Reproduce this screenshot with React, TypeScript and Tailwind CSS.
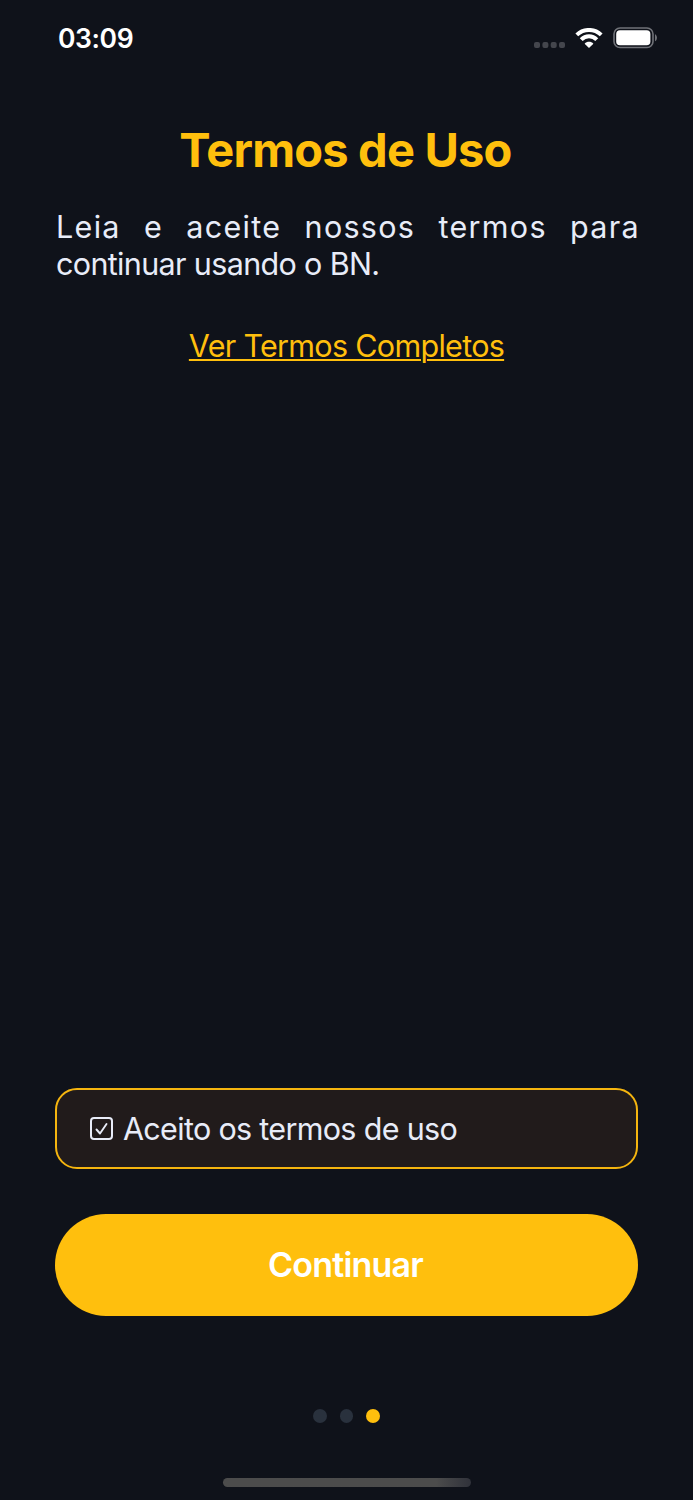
const steps = [
  { id: 'welcome', active: false },
  { id: 'profile', active: false },
  { id: 'terms', active: true },
]

function StatusBar() {
  return (
    <header className="flex h-[76px] items-center justify-between pl-[58px] pr-[35px]">
      <span className="text-[26.5px] font-semibold leading-none tracking-[-0.4px] text-white">03:09</span>
      <div className="flex items-center">
        <svg width="32" height="6" viewBox="0 0 32 6" fill="#44464d" className="mt-[13px]">
          <rect x="0" y="0" width="6" height="6" rx="2" />
          <rect x="8.4" y="0" width="6" height="6" rx="2" />
          <rect x="16.7" y="0" width="6" height="6" rx="2" />
          <rect x="25" y="0" width="6" height="6" rx="2" />
        </svg>
        <svg width="28" height="20" viewBox="0 0 28 20" fill="none" stroke="white" className="ml-[9px]">
          <path d="M1.8 6.9C8.6 0.3 19.4 0.3 26.2 6.9" strokeWidth="4" />
          <path d="M6.2 11.7C10.6 7 17.4 7 21.8 11.7" strokeWidth="4" />
          <path d="M14 20L9.6 15.7C12 13.1 16 13.1 18.4 15.7Z" fill="white" stroke="none" />
        </svg>
        <svg width="45" height="22" viewBox="0 0 45 22" className="ml-[10px]">
          <rect x="1" y="1" width="39" height="19.5" rx="6" fill="none" stroke="#707278" strokeWidth="1.6" />
          <rect x="3.2" y="3.3" width="34.2" height="14.9" rx="3.8" fill="white" />
          <path d="M42 7.2C44.6 8.2 44.6 13.2 42 14.2Z" fill="#707278" />
        </svg>
      </div>
    </header>
  )
}

export default function App() {
  return (
    <div className="flex h-[1500px] w-[693px] flex-col bg-[#0f121a] font-['Inter',sans-serif]">
      <StatusBar />

      <main className="flex flex-1 flex-col px-[55px]">
        <h1 className="mt-[45px] pr-[2px] text-center text-[47px] font-bold leading-[58px] tracking-[-0.8px] text-[#ffbf0d]">
          Termos de Uso
        </h1>

        <p className="-mr-[2px] mt-[29px] pl-[1px] text-[30.5px] leading-[37px] text-[#e8ecf8]">
          <span className="block tracking-[1.3px] [text-align-last:justify]">
            Leia e aceite nossos termos para
          </span>
          <span className="block tracking-[-0.65px]">continuar usando o BN.</span>
        </p>

        <a
          href="#termos"
          className="mt-[45px] self-center text-[30.5px] leading-[37px] tracking-[-0.7px] text-[#ffbf0d] underline decoration-2 underline-offset-[2px]"
        >
          Ver Termos Completos
        </a>

        <div className="mt-auto flex h-[81px] items-center rounded-[22px] border-2 border-[#f5b50f] bg-[#211b1b] pl-[33px] text-[#e8ecf8]">
          <svg width="23" height="23" viewBox="0 0 23 23" fill="none" stroke="currentColor">
            <rect x="1" y="1" width="21" height="21" rx="3" strokeWidth="2" />
            <path d="M6.5 12.5L10 16.5L16.5 7" strokeWidth="1.9" strokeLinecap="round" strokeLinejoin="round" />
          </svg>
          <span className="ml-[10px] text-[30.5px] leading-[37px] tracking-[-0.68px]">Aceito os termos de uso</span>
        </div>

        <button className="mt-[45px] h-[102px] rounded-full bg-[#ffbf0d] pb-[2px] pr-[2px] text-[34px] font-semibold tracking-[-0.8px] text-white">
          Continuar
        </button>

        <div className="mt-[93px] flex justify-center gap-[13px]">
          {steps.map((step) => (
            <span
              key={step.id}
              className={step.active ? 'size-[13.5px] rounded-full bg-[#ffbf0d]' : 'size-[13.5px] rounded-full bg-[#29313d]'}
            />
          ))}
        </div>
      </main>

      {/* Home indicator */}
      <footer className="flex h-[77.5px] items-end justify-center pb-[13px]">
        <div className="h-[9px] w-[248px] rounded-full bg-linear-to-r from-[#4c4c4c] from-86% to-[#30323a]" />
      </footer>
    </div>
  )
}
